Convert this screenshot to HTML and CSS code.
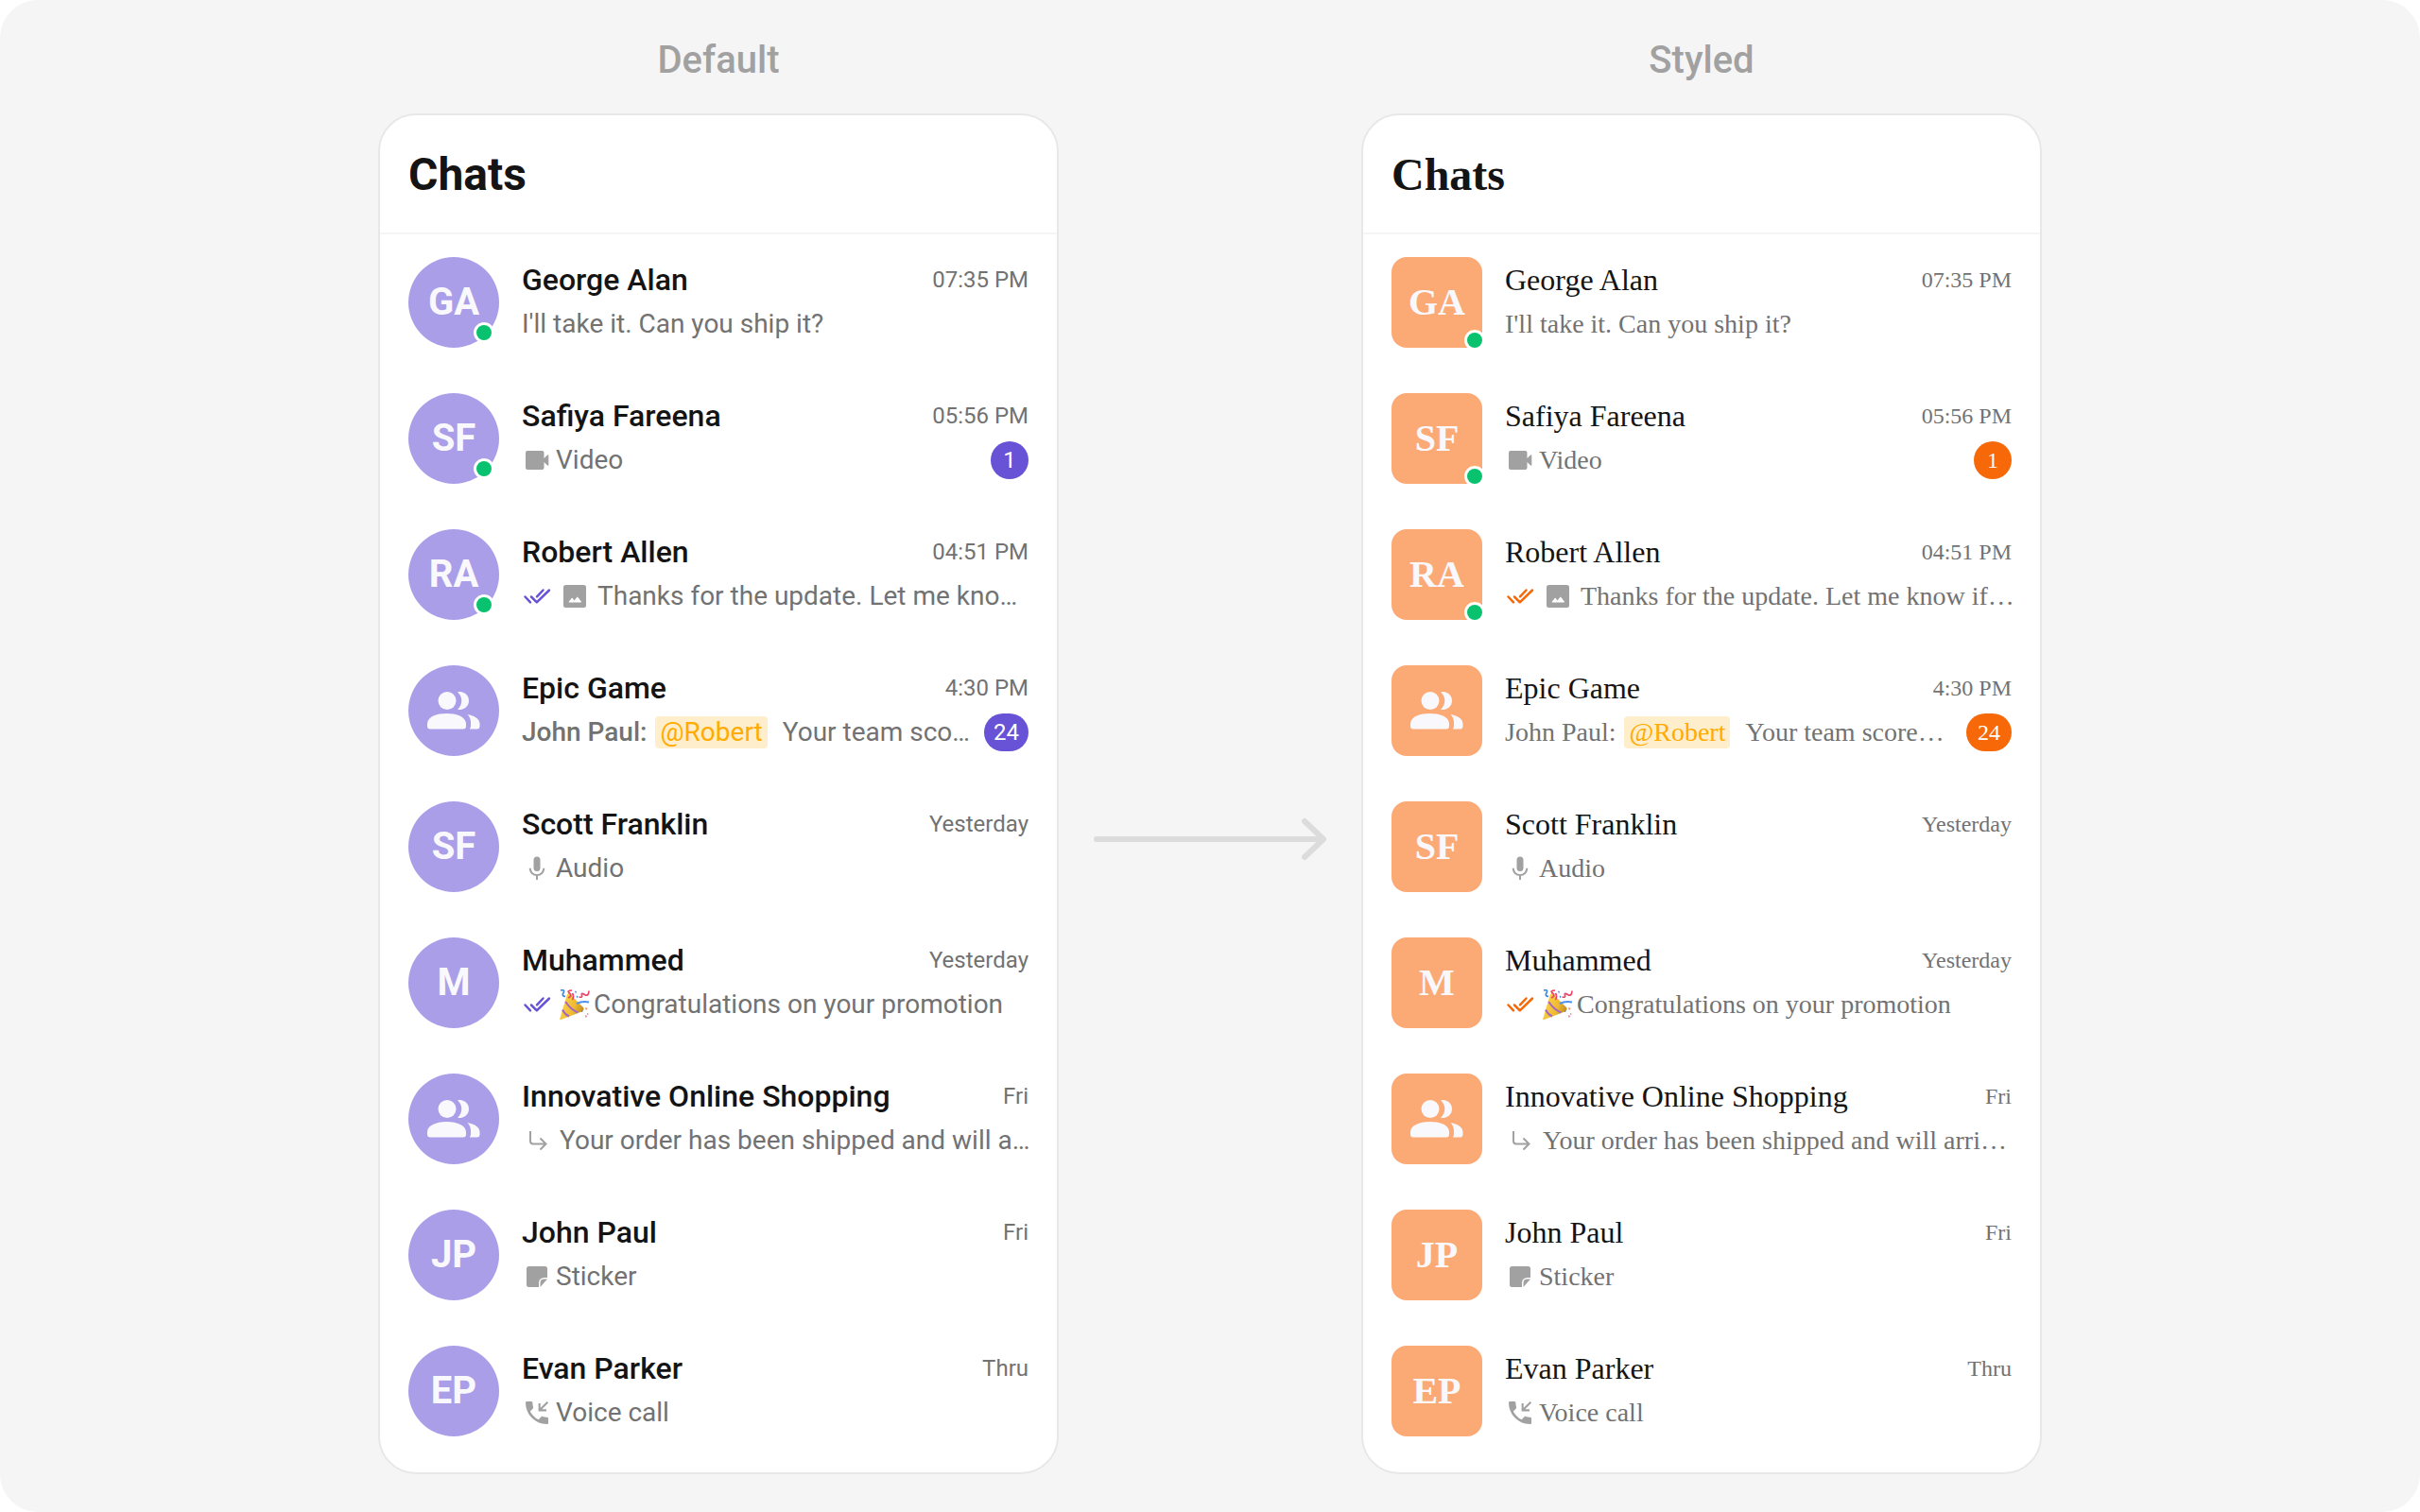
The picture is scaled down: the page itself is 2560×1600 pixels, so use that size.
FILE: index.html
```html
<!DOCTYPE html>
<html lang="en">
<head>
<meta charset="utf-8">
<title>Chats</title>
<link rel="stylesheet" href="styles.css">
</head>
<body>
<svg class="sprite" aria-hidden="true">
  <defs>
    <linearGradient id="cone" x1="0" y1="0.3" x2="1" y2="0.7"><stop offset="0" stop-color="#fbd64f"/><stop offset="0.6" stop-color="#f0b92f"/><stop offset="1" stop-color="#b98a22"/></linearGradient>
  </defs>
  <symbol id="ticks" viewBox="0 0 32 32"><path d="M3.5 16.5l5.5 5.8M10 16.5l5.8 5.8L29 9.5M16 16.3l6.5-6.8" fill="none" stroke="currentColor" stroke-width="2.500" stroke-linecap="round" stroke-linejoin="round"/></symbol>
  <symbol id="video" viewBox="0 0 32 32"><path d="M6 6h15.500a2 2 0 0 1 2 2v6l3.600-3.500q1.200-.8 1.200.6v9.800q0 1.400-1.200.6L23.500 18v6a2 2 0 0 1-2 2H6a2 2 0 0 1-2-2V8a2 2 0 0 1 2-2z"/></symbol>
  <symbol id="image" viewBox="0 0 32 32"><path fill-rule="evenodd" d="M6.500 4h19A2.500 2.500 0 0 1 28 6.500v19a2.500 2.500 0 0 1-2.500 2.500h-19A2.500 2.500 0 0 1 4 25.500v-19A2.500 2.500 0 0 1 6.500 4zM10 22.500h12.500q1 0 .4-.9l-3.600-4.700q-.5-.6-1 0l-2.800 3.500-1.800-2.400q-.5-.6-1 0l-3 3.700q-.5.8.3.8z"/></symbol>
  <symbol id="mic" viewBox="0 0 32 32"><rect x="12.500" y="3.500" width="7" height="15.500" rx="3.500"/><path d="M8.700 15.800a7.300 7.300 0 0 0 14.600 0M16 23.500V28" fill="none" stroke="currentColor" stroke-width="2"/></symbol>
  <symbol id="reply" viewBox="0 0 32 32"><path d="M9 6v10.500q0 3 3 3h13M19.500 13.500l6 6-6 6" fill="none" stroke="currentColor" stroke-width="2"/></symbol>
  <symbol id="sticker" viewBox="0 0 32 32"><path d="M7.500 5h17A2.500 2.500 0 0 1 27 7.500V17h-3.500a5.500 5.500 0 0 0-5.500 5.500V27H7.500A2.500 2.500 0 0 1 5 24.500v-17A2.500 2.500 0 0 1 7.500 5zM19.500 27v-4.500a4 4 0 0 1 4-4H27z"/></symbol>
  <symbol id="call" viewBox="0 0 24 24"><path d="M6.620 10.790c1.440 2.830 3.760 5.150 6.590 6.590l2.200-2.200c.28-.28.670-.36 1.020-.25 1.120.37 2.320.57 3.570.57.550 0 1 .45 1 1V20c0 .55-.45 1-1 1C10.610 21 3 13.390 3 4c0-.55.450-1 1-1h3.500c.55 0 1 .45 1 1 0 1.250.2 2.450.57 3.570.11.350.030.740-.25 1.020z"/><path d="M20.500 3.500l-6 6M14 4.500v5.500h5.500" fill="none" stroke="currentColor" stroke-width="1.600"/></symbol>
  <symbol id="group" viewBox="0 0 56 40"><circle cx="21" cy="9.500" r="9.500"/><path d="M0 36.500V34c0-7 9-11 20.500-11S41 27 41 34v2.500a3 3 0 0 1-3 3H3a3 3 0 0 1-3-3zM32 18.700a12 12 0 0 0 0-18.400A9.500 9.500 0 0 1 44 9.500 9.500 9.500 0 0 1 32 18.700zM45 39.500h7.500a3 3 0 0 0 3-3V34c0-5-5-8.500-13-10 2.500 2.500 3.500 5.500 3.500 9v3.500z"/></symbol>
  <symbol id="party" viewBox="0 0 32 32">
    <path d="M8 5Q10 3 13 7L25 19Q27 22.500 22 24L1.500 32Q-.5 32.500.5 30z" fill="url(#cone)"/>
    <path d="M6.300 13q5 8 13 11.500M3 21.500q2.500 5 7 7" fill="none" stroke="#a667c4" stroke-width="2"/>
    <path d="M1 1q5-1 3 2.500T6 7.500" fill="none" stroke="#3f87ea" stroke-width="1.700"/>
    <path d="M9 9q5-2 1.500-5T13 1M13.500 11q2-3 0-7" fill="none" stroke="#ee4668" stroke-width="1.700"/>
    <path d="M20.500 8q4 1 3-2t3-.5 4.500-4" fill="none" stroke="#ee4668" stroke-width="1.700"/>
    <path d="M18 15q6-3 13-1.500" fill="none" stroke="#4d91ed" stroke-width="2"/>
    <path d="M16 1.500l2 1-1 2zM17.500 6.500l2 1-1 2zM23 22l2 1-2 1z" fill="#397de0"/><path d="M27 19l2.500 1-1.500 2zM29 25l2 1-2 1z" fill="#f07c5b"/><path d="M27 27l2.500 1-2 2.500z" fill="#ef8ac3"/>
  </symbol>
</svg>
<main class="board">
  <section class="panel">
    <h2 class="caption">Default</h2>
    <div class="card">
      <h1 class="title">Chats</h1>
      <ul class="list" id="default-list"></ul>
    </div>
  </section>
  <svg class="arrow" viewBox="0 0 248 46" aria-hidden="true"><path d="M4 23h240M224 4l20 19-20 19"/></svg>
  <section class="panel styled">
    <h2 class="caption">Styled</h2>
    <div class="card">
      <h1 class="title">Chats</h1>
      <ul class="list" id="styled-list"></ul>
    </div>
  </section>
</main>
<script src="chats.js"></script>
</body>
</html>
```
FILE: chats.js
```javascript
const chats = [
  { initials: "GA", name: "George Alan", time: "07:35 PM", online: true, text: "I'll take it. Can you ship it?" },
  { initials: "SF", name: "Safiya Fareena", time: "05:56 PM", online: true, media: "video", text: "Video", unread: 1 },
  { initials: "RA", name: "Robert Allen", time: "04:51 PM", online: true, icons: ["ticks", "image"],
    text: "Thanks for the update. Let me kno…", styledText: "Thanks for the update. Let me know if…" },
  { name: "Epic Game", time: "4:30 PM", sender: "John Paul:", mention: "@Robert",
    text: "Your team sco…", styledText: "Your team score…", unread: 24 },
  { initials: "SF", name: "Scott Franklin", time: "Yesterday", media: "mic", text: "Audio" },
  { initials: "M", name: "Muhammed", time: "Yesterday", icons: ["ticks"], emoji: "party", text: "Congratulations on your promotion" },
  { name: "Innovative Online Shopping", time: "Fri", icons: ["reply"],
    text: "Your order has been shipped and will a…", styledText: "Your order has been shipped and will arri…" },
  { initials: "JP", name: "John Paul", time: "Fri", media: "sticker", text: "Sticker" },
  { initials: "EP", name: "Evan Parker", time: "Thru", media: "call", text: "Voice call" }
];

const icon = (id, extra = "") => `<svg class="icon ${id} ${extra}" aria-hidden="true"><use href="#${id}"/></svg>`;

const row = (chat, styled) => `
  <li class="row">
    <div class="avatar">${chat.initials || icon("group")}${chat.online ? '<span class="online"></span>' : ""}</div>
    <div class="body">
      <div class="line">
        <span class="name">${chat.name}</span>
        <time class="time">${chat.time}</time>
      </div>
      <div class="line">
        <p class="message">
          ${(chat.icons || []).map(id => icon(id)).join("")}
          ${chat.media ? icon(chat.media, "media") : ""}
          ${chat.emoji ? icon(chat.emoji, "media") : ""}
          ${chat.sender ? `<span class="sender">${chat.sender}</span>` : ""}
          ${chat.mention ? `<span class="mention">${chat.mention}</span>` : ""}
          <span>${styled && chat.styledText || chat.text}</span>
        </p>
        ${chat.unread ? `<span class="badge">${chat.unread}</span>` : ""}
      </div>
    </div>
  </li>`;

document.getElementById("default-list").innerHTML = chats.map(c => row(c, false)).join("");
document.getElementById("styled-list").innerHTML = chats.map(c => row(c, true)).join("");
```
FILE: styles.css
```css
* { box-sizing: border-box; }

body {
  margin: 0;
  background: #fff;
  font-family: Roboto, "Liberation Sans", sans-serif;
  color: #141414;
}

.sprite { position: absolute; width: 0; height: 0; }

.board {
  display: grid;
  grid-template-columns: minmax(0, 720px) minmax(0, 320px) minmax(0, 720px);
  justify-content: center;
  align-items: start;
  min-height: 100vh;
  padding: 40px 32px;
  background: #f5f5f5;
  border-radius: 40px;
}

.panel {
  --primary: #6852d6;
  --avatar: #aa9ee8;
}

.styled {
  --primary: #f76808;
  --avatar: #fbaa75;
}

.caption {
  margin: 0 0 32px;
  font-size: 40px;
  line-height: 48px;
  font-weight: 500;
  text-align: center;
  color: #a1a1a1;
}

.card {
  padding-bottom: 14px;
  background: #fff;
  border: 2px solid #e8e8e8;
  border-radius: 40px;
}

.styled .card { font-family: "Liberation Serif", "Times New Roman", serif; }

.title {
  margin: 0;
  padding: 35px 30px 33px;
  font-size: 48px;
  line-height: 56px;
  font-weight: 700;
  border-bottom: 2px solid #f5f5f5;
}

.list { margin: 0; padding: 0; list-style: none; }

.row {
  display: flex;
  align-items: center;
  gap: 24px;
  padding: 24px 30px;
}

.avatar {
  position: relative;
  display: flex;
  flex: none;
  align-items: center;
  justify-content: center;
  width: 96px;
  height: 96px;
  border-radius: 50%;
  background: var(--avatar);
  color: #f9f8fd;
  font-size: 40px;
  line-height: 50px;
  font-weight: 700;
}

.styled .avatar { border-radius: 16px; }

.online {
  position: absolute;
  right: 5px;
  bottom: 5px;
  width: 22px;
  height: 22px;
  border: 3px solid #fff;
  border-radius: 50%;
  background: #09c26f;
}

.styled .online { right: -3px; bottom: -3px; }

.body {
  display: flex;
  flex: 1;
  flex-direction: column;
  gap: 8px;
  min-width: 0;
}

.line {
  display: flex;
  align-items: center;
  justify-content: space-between;
  gap: 16px;
}

.name {
  font-size: 32px;
  line-height: 38px;
  font-weight: 500;
}

.styled .name { font-weight: 400; }

.time {
  font-size: 24px;
  line-height: 28px;
  color: #727272;
}

.message {
  display: flex;
  align-items: center;
  gap: 8px;
  min-width: 0;
  margin: 0;
  font-size: 28px;
  line-height: 40px;
  white-space: nowrap;
  color: #727272;
}

.icon {
  flex: none;
  width: 32px;
  height: 32px;
  fill: currentColor;
  color: #a1a1a1;
}

.media { margin-right: -4px; }
.ticks { color: var(--primary); }
.group { width: 56px; height: 40px; color: #f9f8fd; }

.sender { margin-right: 1px; font-weight: 500; }
.styled .sender { font-weight: 400; }

.mention {
  margin-right: 8px;
  padding: 0 5px;
  line-height: 34px;
  border-radius: 4px;
  background: #ffeecc;
  color: #ffab00;
}

.badge {
  flex: none;
  min-width: 40px;
  padding: 0 10px;
  border-radius: 20px;
  background: var(--primary);
  color: #fff;
  font-size: 24px;
  line-height: 40px;
  text-align: center;
}

.styled .badge { padding: 0 12px; }

.arrow {
  align-self: center;
  justify-self: center;
  width: 248px;
  max-width: 100%;
  height: 46px;
  margin-top: 176px;
  fill: none;
  stroke: #dcdcdc;
  stroke-width: 6px;
  stroke-linecap: round;
  stroke-linejoin: round;
}
```
